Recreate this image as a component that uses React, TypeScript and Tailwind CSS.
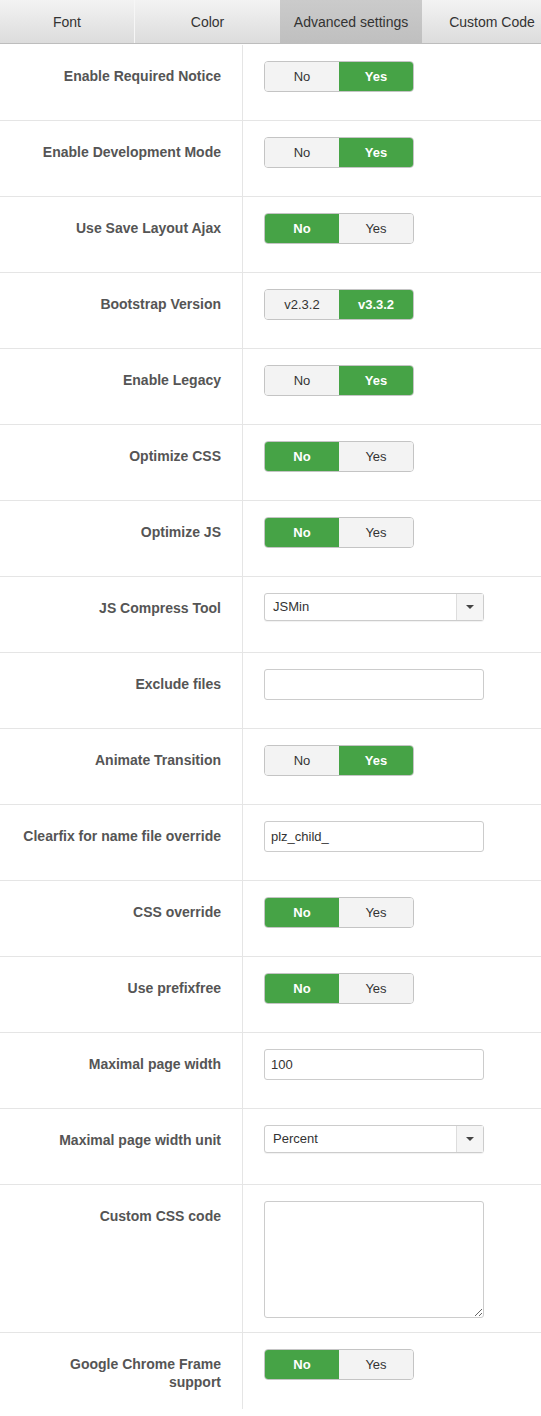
import { ReactNode } from "react"

type Field =
    | { label: string; kind: "toggle"; options: [string, string]; active: 0 | 1 }
    | { label: string; kind: "select"; value: string }
    | { label: string; kind: "input"; value: string }
    | { label: string; kind: "textarea" }

const fields: Field[] = [
    { label: "Enable Required Notice", kind: "toggle", options: ["No", "Yes"], active: 1 },
    { label: "Enable Development Mode", kind: "toggle", options: ["No", "Yes"], active: 1 },
    { label: "Use Save Layout Ajax", kind: "toggle", options: ["No", "Yes"], active: 0 },
    { label: "Bootstrap Version", kind: "toggle", options: ["v2.3.2", "v3.3.2"], active: 1 },
    { label: "Enable Legacy", kind: "toggle", options: ["No", "Yes"], active: 1 },
    { label: "Optimize CSS", kind: "toggle", options: ["No", "Yes"], active: 0 },
    { label: "Optimize JS", kind: "toggle", options: ["No", "Yes"], active: 0 },
    { label: "JS Compress Tool", kind: "select", value: "JSMin" },
    { label: "Exclude files", kind: "input", value: "" },
    { label: "Animate Transition", kind: "toggle", options: ["No", "Yes"], active: 1 },
    { label: "Clearfix for name file override", kind: "input", value: "plz_child_" },
    { label: "CSS override", kind: "toggle", options: ["No", "Yes"], active: 0 },
    { label: "Use prefixfree", kind: "toggle", options: ["No", "Yes"], active: 0 },
    { label: "Maximal page width", kind: "input", value: "100" },
    { label: "Maximal page width unit", kind: "select", value: "Percent" },
    { label: "Custom CSS code", kind: "textarea" },
    { label: "Google Chrome Frame support", kind: "toggle", options: ["No", "Yes"], active: 0 },
]

const tabs = [
    { name: "Font", w: "w-[135px]", active: false },
    { name: "Color", w: "w-[145px]", active: false },
    { name: "Advanced settings", w: "w-[142px]", active: true },
    { name: "Custom Code", w: "w-[140px]", active: false },
]

const Toggle = ({ options, active }: { options: [string, string]; active: 0 | 1 }) => (
    <div className="flex h-[31px] w-[150px] overflow-hidden rounded-[4px] border border-[#c4c4c4]">
        {options.map((opt, i) => (
            <div
                key={opt}
                className={
                    i === active
                        ? "flex flex-1 items-center justify-center bg-[#46a346] text-[13px] font-bold text-white"
                        : "flex flex-1 items-center justify-center bg-[#f3f3f3] text-[13px] text-[#333]"
                }
            >
                {opt}
            </div>
        ))}
    </div>
)

const Select = ({ value }: { value: string }) => (
    <div className="flex h-[28px] w-[220px] rounded-[3px] border border-[#ccc] bg-white shadow-[0_1px_1px_rgba(0,0,0,0.06)]">
        <div className="flex flex-1 items-center pl-[8px] text-[13px] text-[#333]">{value}</div>
        <div className="flex w-[27px] items-center justify-center border-l border-[#ddd] bg-[#f5f5f5]">
            <span className="h-0 w-0 border-x-[4px] border-t-[4px] border-x-transparent border-t-[#444]" />
        </div>
    </div>
)

const Control = ({ field }: { field: Field }): ReactNode => {
    switch (field.kind) {
        case "toggle":
            return <Toggle options={field.options} active={field.active} />
        case "select":
            return <Select value={field.value} />
        case "input":
            return (
                <div className="flex h-[31px] w-[220px] items-center rounded-[3px] border border-[#ccc] bg-white pl-[6px] text-[13px] text-[#333]">
                    {field.value}
                </div>
            )
        case "textarea":
            return (
                <textarea
                    readOnly
                    className="block h-[117px] w-[220px] resize rounded-[3px] border border-[#ccc] bg-white outline-none"
                />
            )
    }
}

export default function App() {
    return (
        <div className="h-[1416px] w-[541px] overflow-hidden bg-white font-['Liberation_Sans',Arial,sans-serif]">
            <nav className="flex h-[44px] border-b border-[#bdbdbd] bg-gradient-to-b from-[#f3f3f3] to-[#dcdcdc]">
                {tabs.map((tab, i) => (
                    <div
                        key={tab.name}
                        className={[
                            "flex shrink-0 items-center justify-center pt-[1px] text-[14px] text-[#333]",
                            tab.w,
                            tab.active ? "bg-gradient-to-b from-[#cbcbcb] to-[#bfbfbf]" : "",
                            i === 0 ? "border-r border-[#f6f6f6]" : "",
                        ].join(" ")}
                    >
                        {tab.name}
                    </div>
                ))}
            </nav>

            <div className="pt-[1px]">
                {fields.map((field) => (
                    <div
                        key={field.label}
                        className={
                            field.kind === "textarea"
                                ? "flex border-b border-[#e5e5e5]"
                                : "flex min-h-[76px] border-b border-[#e5e5e5] last:border-b-0"
                        }
                    >
                        <div className="w-[243px] shrink-0 border-r border-[#e5e5e5] pl-[22px] pr-[21px] pt-[22px] text-right text-[14px] font-bold leading-[18px] text-[#555]">
                            {field.label}
                        </div>
                        <div className={field.kind === "textarea" ? "flex-1 pb-[14px] pl-[21px] pt-[16px]" : "flex-1 pl-[21px] pt-[16px]"}>
                            <Control field={field} />
                        </div>
                    </div>
                ))}
            </div>
        </div>
    )
}
